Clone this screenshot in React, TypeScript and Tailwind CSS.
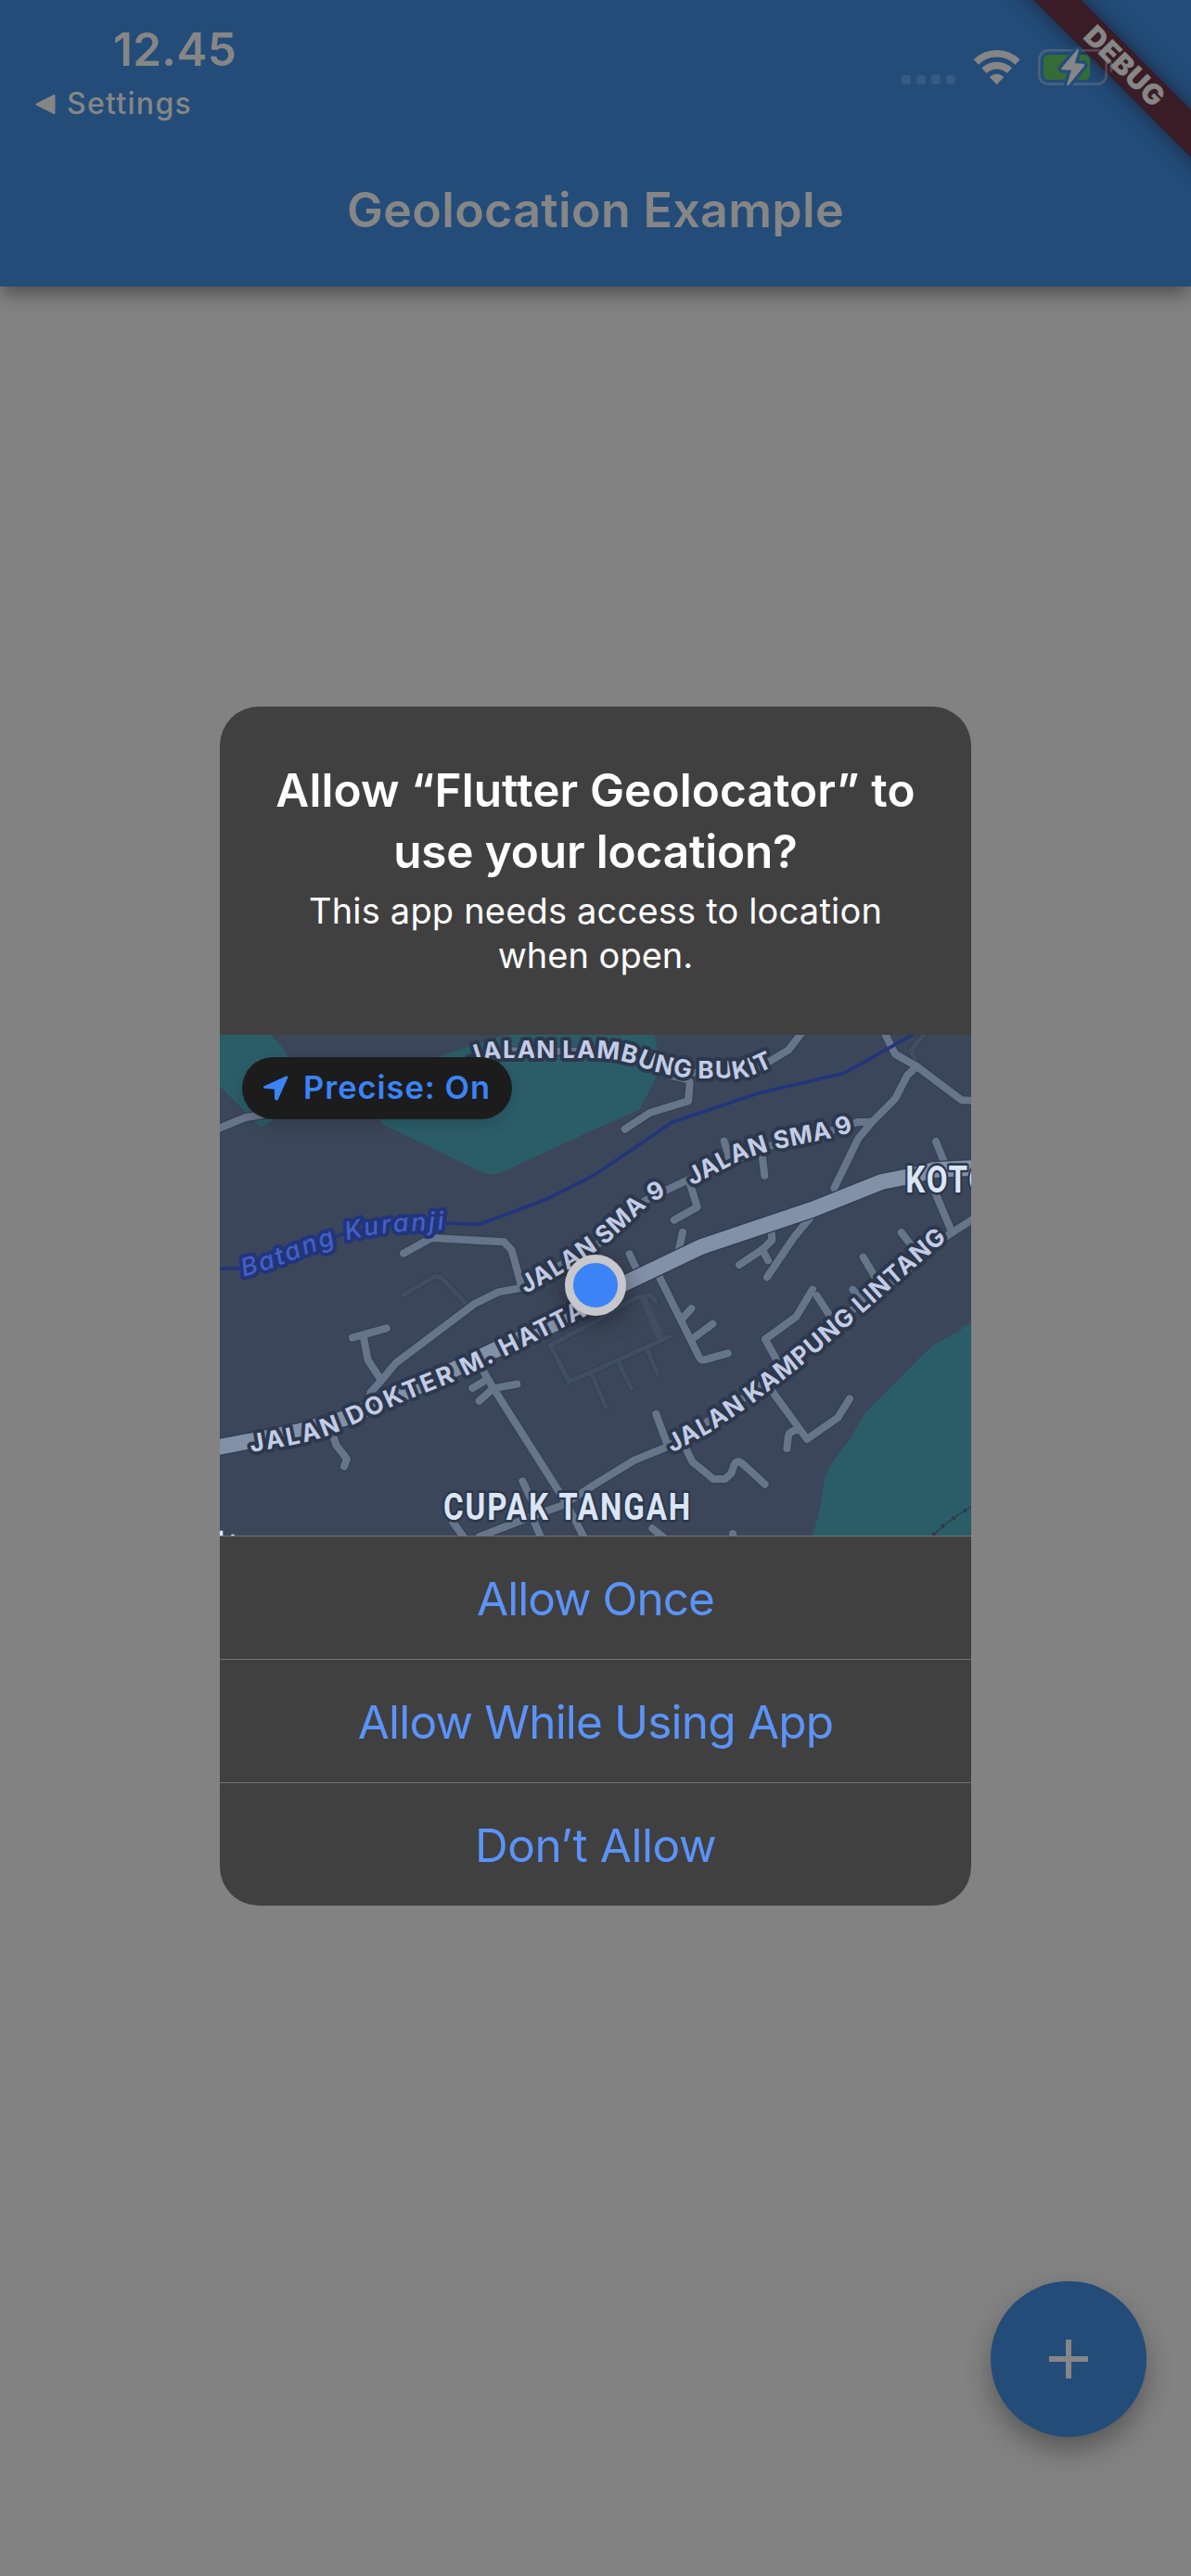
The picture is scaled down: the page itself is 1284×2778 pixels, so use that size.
import type { ReactNode } from "react";

/* Map drawing units: three per screen pixel. */

const MINOR_ROADS = [
  "M0 358 L105 315 L220 297",
  "M615 755 L705 705 L940 718 L965 745 L997 862",
  "M1005 865 L922 880 L845 918 L590 1110 L540 1170 L508 1205 L500 1250",
  "M450 1028 L560 997",
  "M485 1022 L500 1100 L538 1158",
  "M385 1335 L397 1375 L432 1420 L423 1444",
  "M870 1130 L905 1190 L1130 1545 L1172 1622 L1202 1680",
  "M838 1191 L884 1163",
  "M860 1232 L905 1192 L982 1178",
  "M1000 1492 L1030 1555",
  "M860 1672 L1040 1602 L1130 1570 L1230 1505 L1360 1425 L1470 1380 L1590 1305 L1720 1220 L1830 1135 L1920 1070 L2070 935 L2220 830 L2370 700 L2470 636",
  "M1030 1605 L1062 1680",
  "M775 1625 L815 1680",
  "M1420 1645 L1470 1685",
  "M1680 1662 L1686 1690",
  "M1432 1275 L1470 1378",
  "M1530 1390 L1550 1430 L1617 1485 L1655 1485 L1675 1467 L1685 1437 Q1696 1424 1710 1434 L1784 1502",
  "M1938 872 L1885 960 L1785 1033 L1830 1115",
  "M1810 1205 L1920 1356 L2020 1286 L2058 1225",
  "M1855 1386 L1860 1344 Q1864 1330 1890 1326",
  "M1952 892 L1997 962",
  "M2068 872 L2100 910",
  "M2102 767 L2145 840",
  "M2225 687 L2256 727",
  "M2337 393 L2366 465",
  "M2333 555 L2386 680",
  "M2168 36 L2205 110 L2275 150 L2420 259 L2470 262",
  "M2275 150 L2245 178 L2205 255 L2130 330 L2085 385 L2008 544",
  "M2130 330 L2085 330 L1970 368 L1790 410 L1650 468 L1530 520 L1465 550 L1395 585 L1270 710 L1110 800 L1010 862",
  "M1652 392 L1667 440 L1660 460",
  "M1775 440 L1783 503",
  "M1540 525 L1565 605 L1490 647",
  "M1518 687 L1506 740",
  "M1346 757 L1375 820",
  "M1437 820 L1572 1092 Q1578 1102 1590 1099 L1664 1078",
  "M1546 933 L1515 968",
  "M1615 983 L1545 1035",
  "M1805 688 L1807 712 L1776 742 L1701 792",
  "M1775 742 L1794 778",
  "M1930 640 L1880 700 L1791 832",
  "M1912 30 L1860 97 L1800 133 L1720 168 L1560 170 L1480 172 L1370 120 L1260 102 L900 100",
  "M1470 178 L1525 190 Q1542 195 1541 207 L1536 262 L1412 300 L1331 353",
];

const FOOT_PATHS = [
  "M615 890 L705 836 Q722 824 740 836 L820 920",
  "M1255 965 L1090 1052 L1150 1170 L1230 1136 L1475 1024",
  "M1225 1150 L1270 1252",
  "M1310 1105 L1352 1193",
  "M1400 1060 L1436 1144",
  "M1385 895 L1445 1030",
  "M1255 960 L1370 898 L1415 890 L1432 910",
  "M2305 40 L2256 98 L2280 150",
];

const MAIN_ROAD =
  "M0 1385 L130 1360 L280 1330 L420 1290 L600 1215 L790 1125 L910 1068 L1110 980 L1236 895 L1330 852 L1580 733 L1940 612 L2160 524 L2250 506 L2330 485 L2470 478";

const RIVER =
  "M0 805 L110 803 L300 750 L410 695 L600 650 L745 657 L860 661 L1070 583 L1230 503 L1485 330 L1760 238 L2040 172 L2275 40";

interface RoadLabel {
  id: string;
  text: string;
  path: string;
  length: number;
}

const ROAD_LABELS: RoadLabel[] = [
  { id: "bukit", text: "JALAN LAMBUNG BUKIT", path: "M830 146 Q875 126 940 124 L1240 124 Q1330 126 1400 158 Q1500 189 1580 189 L1690 189 Q1740 188 1830 140", length: 1000 },
  { id: "sma-low", text: "JALAN SMA 9", path: "M1010 886 L1120 824 Q1220 765 1285 712 L1400 605 Q1440 575 1500 552", length: 560 },
  { id: "sma-high", text: "JALAN SMA 9", path: "M1548 536 L1690 462 Q1780 424 1860 410 L2010 380 L2130 340", length: 555 },
  { id: "hatta", text: "JALAN DOKTER M. HATTA", path: "M122 1398 L260 1374 Q370 1352 450 1310 L620 1232 L800 1160 L1000 1060 L1300 910", length: 1180 },
  { id: "lintang", text: "JALAN KAMPUNG LINTANG", path: "M1484 1400 L1600 1338 L1740 1245 L1900 1120 L2060 985 L2200 860 L2420 668", length: 1130 },
];

function MapLabel({ id, text, path, length }: RoadLabel) {
  return (
    <g className="text-[79px] font-bold">
      <path id={id} d={path} fill="none" />
      <text fill="#c3cce6" stroke="#2c384c" strokeWidth="24" strokeLinejoin="round" paintOrder="stroke">
        <textPath href={`#${id}`} textLength={length}>
          {text}
        </textPath>
      </text>
    </g>
  );
}

function LocationMap() {
  return (
    <svg viewBox="21 48 2430 1620" className="block h-[540px] w-[810px]" fill="none">
      <rect x="21" y="48" width="2430" height="1620" fill="#3b465a" />
      <g fill="#2b5d69">
        <path d="M0 40 H175 Q222 80 245 122 L200 318 L155 347 L0 195 Z" />
        <path d="M960 44 L720 120 L480 200 L535 320 Q550 345 590 358 L868 492 Q900 506 935 492 L1240 350 L1378 290 L1435 180 L1437 100 L1425 40 Z" />
        <path d="M2470 960 L2405 1012 Q2330 1045 2300 1078 L2110 1270 L2052 1366 Q2000 1425 1978 1480 L1965 1560 Q1955 1615 1933 1680 H2470 Z" />
      </g>
      <g strokeLinejoin="round" strokeLinecap="round">
        {FOOT_PATHS.map((d) => (
          <path key={d} d={d} stroke="#354055" strokeWidth="22" />
        ))}
        {FOOT_PATHS.map((d) => (
          <path key={d} d={d} stroke="#414d62" strokeWidth="15" />
        ))}
        <path d="M1392 905 L1442 1020" stroke="#414d62" strokeWidth="24" />
        {MINOR_ROADS.map((d) => (
          <path key={d} d={d} stroke="#354155" strokeWidth="32" />
        ))}
        {MINOR_ROADS.map((d) => (
          <path key={d} d={d} stroke="#67758b" strokeWidth="24" />
        ))}
      </g>
      <path d={RIVER} stroke="#23357a" strokeWidth="11" strokeLinejoin="round" />
      <g strokeLinejoin="round">
        <path d={MAIN_ROAD} stroke="#323d50" strokeWidth="58" />
        <path d={MAIN_ROAD} stroke="#8290a8" strokeWidth="50" />
      </g>
      <g stroke="#2b3a40" strokeWidth="4">
        <path d="M2318 1676 L2330 1664 L2360 1637 L2395 1611 L2431 1587 L2455 1572" />
        <path d="M2326 1658 L2334 1670 M2356 1631 L2364 1643 M2391 1605 L2399 1617 M2427 1581 L2435 1593" strokeWidth="6" />
      </g>

      <g fontFamily="Inter">
        <path id="river-label" d="M97 830 Q205 802 290 762 L420 716 Q520 690 620 684 L790 676" />
        <text
          className="text-[80px] font-medium italic"
          fill="#4460c6"
          stroke="#22357a"
          strokeWidth="24"
          strokeLinejoin="round"
          paintOrder="stroke"
        >
          <textPath href="#river-label" textLength={672}>
            Batang Kuranji
          </textPath>
        </text>
        {ROAD_LABELS.map((label) => (
          <MapLabel key={label.id} {...label} />
        ))}
      </g>

      <g
        fontFamily="Roboto"
        fill="#dbe5f5"
        stroke="#2c384c"
        strokeWidth="16"
        strokeLinejoin="round"
        paintOrder="stroke"
        className="text-[121px] font-bold"
      >
        <text transform="translate(744 1616) scale(0.82 1)" letterSpacing="7">
          CUPAK TANGAH
        </text>
        <text transform="translate(2239 557) scale(0.82 1)" letterSpacing="7">
          KOTO
        </text>
      </g>
      <path d="M21 1652 h10 v16 h-10 z M58 1664 h10 v4 h-10 z" fill="#dbe5f5" />
    </svg>
  );
}

function StatusIcons() {
  return (
    <div className="flex">
      <div className="mt-[28px] flex gap-[6px]">
        {[0, 1, 2, 3].map((n) => (
          <span key={n} className="size-[10px] rounded-[3px] bg-[#375a82]" />
        ))}
      </div>
      <svg viewBox="450 159 156 117" className="ml-[19px] h-[39px] w-[52px]" fill="none">
        <g stroke="#868686" strokeWidth="23">
          <path d="M460 201 A95 95 0 0 1 594 201" />
          <path d="M486 229 A58 58 0 0 1 568 229" />
        </g>
        <path d="M527 271 L506 249 Q527 234 547 249 Z" fill="#868686" stroke="#868686" strokeWidth="4" strokeLinejoin="round" />
      </svg>
      <svg viewBox="660 153 249 129" className="-mt-[2px] ml-[18px] h-[43px] w-[83px]" fill="none">
        <rect x="664" y="163" width="217" height="109" rx="30" stroke="#868686" strokeOpacity="0.38" strokeWidth="8" />
        <path d="M893 197 Q905 206 905 217 Q905 228 893 237 Z" fill="#868686" fillOpacity="0.42" />
        <rect x="678" y="177" width="150" height="81" rx="16" fill="#356b37" />
        <path d="M788 159 L735 221 L737 226 L768 227 L753 275 L758 277 L811 212 L809 206 L779 205 L792 161 Z" fill="#868686" stroke="#234c79" strokeWidth="20" strokeLinejoin="round" paintOrder="stroke" />
      </svg>
    </div>
  );
}

function DebugBanner() {
  return (
    <div className="absolute top-0 right-0 size-[240px] overflow-hidden">
      <div className="absolute top-[53.5px] left-[-32px] flex h-[36px] w-[400px] rotate-45 items-center justify-center bg-[#3a1c26] shadow-[0_0_22px_rgba(20,25,40,0.75)]">
        <span className="-mt-[2px] text-[30.5px] leading-none font-black tracking-[0.47px] text-[#868686]">DEBUG</span>
      </div>
    </div>
  );
}

function DialogButton({ children, tracking }: { children: ReactNode; tracking: string }) {
  return (
    <button
      className={`flex h-[133px] items-center justify-center border-t border-[#737373] pt-[2px] text-[49.5px] leading-[66px] text-[#5b93f8] ${tracking}`}
    >
      {children}
    </button>
  );
}

function PermissionDialog() {
  return (
    <div className="flex w-[810px] flex-col overflow-hidden rounded-[42px] bg-[#404040]">
      <div className="flex h-[354px] flex-col items-center pt-[57px] text-center whitespace-nowrap text-white">
        <h2 className="text-[49.5px] leading-[66px] font-semibold">
          <span className="tracking-[0.1px]">Allow “Flutter Geolocator” to</span>
          <br />
          <span className="tracking-[-0.16px]">use your location?</span>
        </h2>
        <p className="mt-[7px] text-[38px] leading-[48px]">
          <span className="tracking-[0.19px]">This app needs access to location</span>
          <br />
          when open.
        </p>
      </div>
      <div className="relative h-[540px]">
        <LocationMap />
        <div className="absolute top-[24px] left-[24px] flex h-[67px] w-[291px] items-center rounded-full bg-[#1c1c1c] pl-[23px] text-[#3b83f7] shadow-[0_6px_16px_rgba(0,0,0,0.15)]">
          <svg viewBox="164 182 80 80" className="size-[27px]" fill="currentColor" stroke="currentColor" strokeWidth="8" strokeLinejoin="round">
            <path d="M168 219 L238 187 L207 257 L204 256 L203 222 Z" />
          </svg>
          <span className="ml-[16px] text-[34.5px] leading-none font-semibold tracking-[0.97px] whitespace-nowrap">
            Precise: On
          </span>
        </div>
        <div className="absolute inset-0 flex items-center justify-center">
          <span className="size-[66px] rounded-full border-[9px] border-[#c7c7cc] bg-[#3b83f7] shadow-[0_6px_26px_rgba(0,0,0,0.4)]" />
        </div>
      </div>
      <DialogButton tracking="tracking-[-0.97px]">Allow Once</DialogButton>
      <DialogButton tracking="tracking-[-0.8px]">Allow While Using App</DialogButton>
      <DialogButton tracking="tracking-[-0.43px]">Don’t Allow</DialogButton>
    </div>
  );
}

export default function App() {
  return (
    <div className="relative flex h-[2778px] w-[1284px] flex-col overflow-hidden bg-[#828282] font-['Inter',sans-serif]">
      <header className="relative h-[309px] shrink-0 bg-[#234c79] text-[#868686] shadow-[0_10px_18px_-2px_rgba(0,0,0,0.38)]">
        <DebugBanner />
        <div className="relative flex justify-between pt-[28px] pr-[82px]">
          <div>
            <div className="pl-[122px] text-[49.5px] leading-[50px] font-semibold tracking-[0.29px]">12.45</div>
            <div className="mt-[16px] flex items-center pl-[38px] text-[32px] leading-[36px] font-medium tracking-[1.29px]">
              <svg viewBox="0 0 22 21" className="mr-[12px] h-[21px] w-[22px]" fill="currentColor" stroke="currentColor" strokeWidth="2" strokeLinejoin="round">
                <path d="M1.5 10.5 L20.5 1 V20 Z" />
              </svg>
              Settings
            </div>
          </div>
          <div className="mt-[25px]">
            <StatusIcons />
          </div>
        </div>
        <h1 className="mt-[67px] text-center text-[52px] leading-[60px] font-semibold tracking-[0.3px]">Geolocation Example</h1>
      </header>
      <main className="flex flex-1 flex-col items-end justify-end pr-[48px] pb-[150px]">
        <button className="flex size-[168px] items-center justify-center rounded-full bg-[#234c79] shadow-[0_14px_28px_rgba(0,0,0,0.32)]">
          <svg viewBox="0 0 42 42" className="size-[42px]" fill="#868686">
            <path d="M18 0h6v18h18v6H24v18h-6V24H0v-6h18z" />
          </svg>
        </button>
      </main>
      <div className="absolute inset-0 flex items-start justify-center pt-[762px]">
        <PermissionDialog />
      </div>
    </div>
  );
}
